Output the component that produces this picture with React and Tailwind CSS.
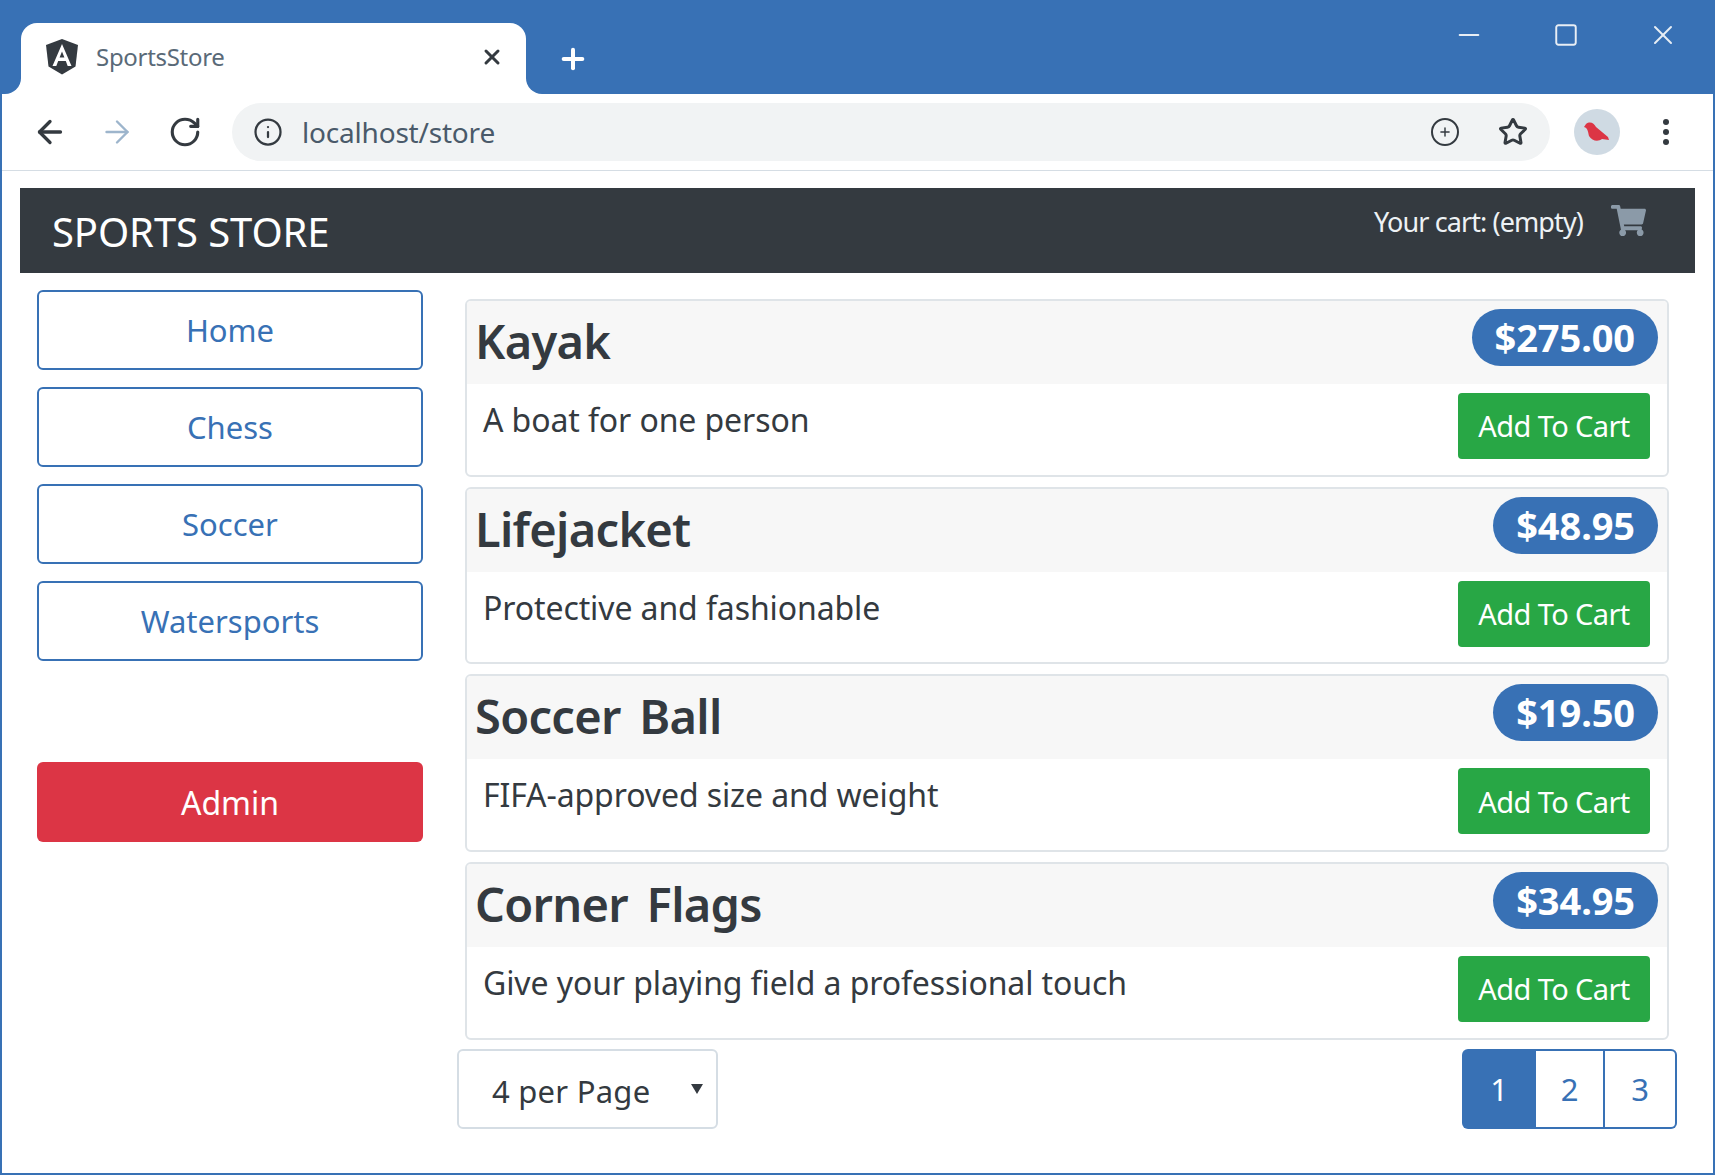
import React from "react";
import { FaShoppingCart } from "react-icons/fa";
import { ArrowLeft, ArrowRight, RotateCw, Info, Star, Plus, X, Minus, Square } from "lucide-react";

const products = [
  ["Kayak", "$275.00", "A boat for one person"],
  ["Lifejacket", "$48.95", "Protective and fashionable"],
  ["Soccer Ball", "$19.50", "FIFA-approved size and weight"],
  ["Corner Flags", "$34.95", "Give your playing field a professional touch"],
];

function Angular() {
  return (
    <svg width="34" height="36" viewBox="0 0 34 36">
      <path d="M17 0 L33 6 L30.5 27.5 L17 35.5 L3.5 27.5 L1 6 Z" fill="#343a40" />
      <path d="M17 5 L7.5 27 H11.3 L13.2 22 H20.8 L22.7 27 H26.5 Z M14.6 18.6 L17 12.6 L19.4 18.6 Z" fill="#fff" fillRule="evenodd" />
    </svg>
  );
}

function Flare({ side }) {
  return (
    <span className={side === "left" ? "absolute bottom-0 left-[-16px] w-[16px] h-[16px] bg-white" : "absolute bottom-0 right-[-16px] w-[16px] h-[16px] bg-white"}>
      <span className={side === "left" ? "block w-full h-full bg-[#3871b5] rounded-br-[16px]" : "block w-full h-full bg-[#3871b5] rounded-bl-[16px]"} />
    </span>
  );
}

export default function App() {
  return (
    <div className="w-[1715px] h-[1175px] border-2 border-[#3871b5] bg-white overflow-hidden text-[#343a40]" style={{ fontFamily: '"Noto Sans", sans-serif' }}>
      <div className="h-[92px] bg-[#3871b5] flex items-end relative pl-[19px]">
        <div className="relative w-[505px] h-[71px] bg-white rounded-t-[16px] flex items-center pl-[24px] pr-[22px] pb-[3px]">
          <Flare side="left" />
          <Flare side="right" />
          <Angular />
          <span className="ml-[17px] text-[24px] text-[#5a6a78] tracking-[-0.3px]">SportsStore</span>
          <X className="ml-auto text-[#343a40]" size={24} strokeWidth={3} />
        </div>
        <Plus className="ml-[31px] mb-[19px] text-white" size={32} strokeWidth={3} />
        <div className="ml-auto flex items-center gap-[68px] mb-[43px] mr-[34px] text-[#e8eef5]">
          <Minus size={32} strokeWidth={1.5} />
          <Square size={26} strokeWidth={1.8} />
          <X size={32} strokeWidth={1.5} />
        </div>
      </div>
      <div className="h-[76px] border-b border-[#d5dde4] flex items-center pl-[30px] box-content">
        <ArrowLeft size={36} strokeWidth={2.2} className="text-[#343a40] shrink-0" />
        <ArrowRight size={36} strokeWidth={1.6} className="ml-[31px] text-[#9db5cc] shrink-0" />
        <RotateCw size={34} strokeWidth={2.2} className="ml-[33px] text-[#343a40] shrink-0" />
        <div className="ml-[30px] w-[1318px] h-[58px] rounded-full bg-[#f1f3f4] flex items-center pl-[21px] pr-[22px]">
          <Info size={30} strokeWidth={1.8} className="text-[#343a40]" />
          <span className="ml-[19px] text-[28px] text-[#4a5a6a] tracking-[-0.2px]">localhost/store</span>
          <div className="ml-auto flex items-center gap-[39px]">
            <div className="w-[28px] h-[28px] rounded-full border-2 border-[#343a40] flex items-center justify-center">
              <Plus size={14} strokeWidth={2.5} />
            </div>
            <Star size={30} strokeWidth={2.4} className="text-[#343a40]" />
          </div>
        </div>
        <div className="ml-[24px] w-[46px] h-[46px] rounded-full bg-[#cfdae3] flex items-center justify-center shrink-0">
          <svg width="26" height="20" viewBox="0 0 26 20"><path d="M2 2 C6 -1 10 1 12 5 C16 8 20 12 24 15 L25 18 L18 17 C14 20 8 19 5 14 C4 10 4 6 0 5 Z" fill="#dc3545" /></svg>
        </div>
        <div className="ml-[43px] flex flex-col gap-[4px] shrink-0">
          <i className="block w-[6px] h-[6px] rounded-full bg-[#343a40]" />
          <i className="block w-[6px] h-[6px] rounded-full bg-[#343a40]" />
          <i className="block w-[6px] h-[6px] rounded-full bg-[#343a40]" />
        </div>
      </div>
      <div className="mt-[17px] mx-[18px] h-[85px] bg-[#343a40] flex justify-between pl-[32px] pr-[49px] text-white">
        <span className="text-[40px] leading-[88px] tracking-[-0.1px]">SPORTS STORE</span>
        <div className="flex items-start pt-[15px]">
          <span className="text-[27px] leading-[38px] tracking-[-0.9px] text-[#eef2f5]">Your cart: (empty)</span>
          <FaShoppingCart size={35} className="ml-[28px] text-[#8b9aa8]" />
        </div>
      </div>
      <div className="flex mt-[17px] ml-[35px] mr-[36px]">
        <div className="w-[386px] shrink-0 flex flex-col gap-[17px]">
          {["Home", "Chess", "Soccer", "Watersports"].map((c) => (
            <div key={c} className="h-[80px] border-2 border-[#3871b5] rounded-[6px] flex items-center justify-center text-[31px] text-[#3871b5]">{c}</div>
          ))}
          <div className="mt-[84px] h-[80px] pt-[2px] bg-[#dc3545] rounded-[6px] flex items-center justify-center text-[32px] text-white">Admin</div>
        </div>
        <div className="ml-[34px] flex-1 pt-[9px]">
          <div className="mx-[8px] flex flex-col gap-[10px]">
            {products.map(([name, price, desc]) => (
              <div key={name} className="h-[177.67px] border-2 border-[#dfe4e8] rounded-[6px] overflow-hidden">
                <div className="h-[83px] bg-[#f7f7f7] flex justify-between pl-[8px] pr-[9px] pt-[8px]">
                  <span className="text-[47px] leading-[64px] font-semibold tracking-[-0.7px] [word-spacing:7px]">{name}</span>
                  <span className="h-[57px] rounded-full bg-[#3871b5] text-white text-[38px] font-bold flex items-center px-[23px] tracking-[-0.1px]">{price}</span>
                </div>
                <div className="flex justify-between pl-[16px] pr-[17px] pt-[9px]">
                  <span className="text-[32px] leading-[53px] tracking-[-0.1px]">{desc}</span>
                  <span className="w-[192px] h-[66px] rounded-[4px] bg-[#28a745] text-white text-[29px] flex items-center justify-center tracking-[-0.6px]">Add To Cart</span>
                </div>
              </div>
            ))}
          </div>
          <div className="mt-[9px] flex justify-between">
            <div className="w-[261px] h-[80px] border-2 border-[#d5dde4] rounded-[6px] flex items-start pl-[33px] relative">
              <span className="text-[31px] leading-[80px] tracking-[0.25px]">4 per Page</span>
              <svg className="absolute right-[13px] top-[32px]" width="12" height="12" viewBox="0 0 12 12"><path d="M0 1 H12 L6 11 Z" fill="#343a40" /></svg>
            </div>
            <div className="flex h-[80px] text-[31px] text-[#3871b5]">
              <div className="w-[74px] pt-[2px] bg-[#3871b5] text-white rounded-l-[6px] flex items-center justify-center">1</div>
              <div className="w-[69px] pt-[2px] border-y-2 border-r-2 border-[#3871b5] flex items-center justify-center">2</div>
              <div className="w-[72px] pt-[2px] border-y-2 border-r-2 border-[#3871b5] rounded-r-[6px] flex items-center justify-center">3</div>
            </div>
          </div>
        </div>
      </div>
    </div>
  );
}
